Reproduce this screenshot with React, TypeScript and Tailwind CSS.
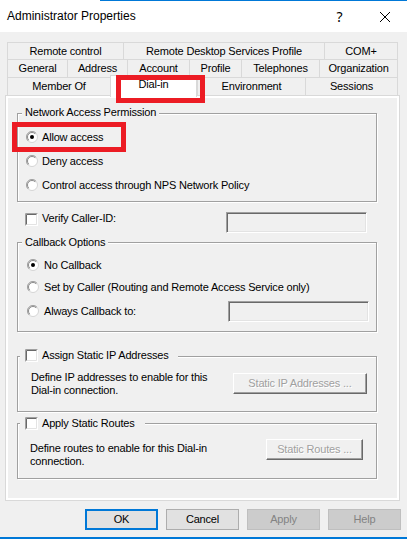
function Radio({ checked }: { checked?: boolean }) {
  return (
    <svg width="12" height="12" viewBox="0 0 12 12" className="shrink-0">
      <circle cx="6" cy="6" r="5.5" fill="#fff" stroke="#d4d4d4" />
      <path d="M2.1 9.9 A5.5 5.5 0 0 1 9.9 2.1" fill="none" stroke="#a0a0a0" />
      <path d="M2.8 9.2 A4.5 4.5 0 0 1 9.2 2.8" fill="none" stroke="#8c8c8c" />
      {checked && <circle cx="6" cy="6" r="2" fill="#000" />}
    </svg>
  );
}

function Check() {
  return (
    <svg width="13" height="13" viewBox="0 0 13 13" className="shrink-0">
      <rect x="0" y="0" width="13" height="13" fill="#fff" />
      <path d="M0.5 12.5V0.5H12.5" fill="none" stroke="#a0a0a0" />
      <path d="M1.5 11.5V1.5H11.5" fill="none" stroke="#696969" />
      <path d="M1 12.5H12.5V1" fill="none" stroke="#ffffff" />
      <path d="M2 11.5H11.5V2" fill="none" stroke="#e3e3e3" />
    </svg>
  );
}

function Tab({ label, w, last }: { label: string; w: string; last?: boolean }) {
  return (
    <div
      className={`${w} h-full flex items-center justify-center border-t border-l border-[#d9d9d9] ${
        last ? "border-r" : ""
      }`}
    >
      {label}
    </div>
  );
}

function SunkenInput({ className }: { className: string }) {
  return (
    <div
      className={`${className} w-[141px] h-[21px] bg-[#f0f0f0] border-t border-l border-t-[#a0a0a0] border-l-[#a0a0a0] border-b border-r border-b-white border-r-white shadow-[inset_1px_1px_0_#696969,inset_-1px_-1px_0_#e3e3e3]`}
    />
  );
}

function ClassicButton({ label, className }: { label: string; className: string }) {
  return (
    <div
      className={`${className} h-[21px] flex items-center justify-center bg-[#f0f0f0] border-t border-l border-t-white border-l-white border-b border-r border-b-[#696969] border-r-[#696969] shadow-[inset_-1px_-1px_0_#a0a0a0] text-[#a0a0a0] [text-shadow:1px_1px_0_#fff]`}
    >
      {label}
    </div>
  );
}

const groupBox =
  "relative w-[360px] border border-[#a0a0a0] shadow-[inset_1px_1px_0_#fff,1px_1px_0_#fff]";

export default function App() {
  return (
    <div className="w-[407px] h-[539px] bg-[#f0f0f0] flex flex-col text-[11px] leading-[13px] tracking-[-0.18px] text-black font-['Liberation_Sans',Arial,sans-serif] overflow-hidden">
      {/* title bar */}
      <div className="bg-white shrink-0 tracking-normal">
        <div className="ml-[100px] h-px bg-[#0078d7]" />
        <div className="h-[31px] flex items-center">
          <span className="pl-[7px] text-[12px] leading-[15px]">Administrator Properties</span>
          <div className="ml-auto w-[45px] h-full flex items-center justify-center text-[14px] font-['Noto_Sans',sans-serif]">
            ?
          </div>
          <div className="w-[45px] h-full flex items-center justify-center">
            <svg width="10" height="10" viewBox="0 0 10 10">
              <path d="M0 0L10 10M10 0L0 10" stroke="#000" strokeWidth="1" />
            </svg>
          </div>
        </div>
      </div>

      {/* tabs + page */}
      <div className="pt-[10px] pl-[5px]">
        <div className="ml-[2px] w-[391px]">
          <div className="h-[17px] flex">
            <Tab label="Remote control" w="w-[116px]" />
            <Tab label="Remote Desktop Services Profile" w="w-[201px]" />
            <Tab label="COM+" w="w-[74px]" last />
          </div>
          <div className="h-[18px] flex">
            <Tab label="General" w="w-[60px]" />
            <Tab label="Address" w="w-[60px]" />
            <Tab label="Account" w="w-[62px]" />
            <Tab label="Profile" w="w-[52px]" />
            <Tab label="Telephones" w="w-[78px]" />
            <Tab label="Organization" w="w-[79px]" last />
          </div>
          <div className="h-[18px] flex items-start">
            <Tab label="Member Of" w="w-[103px]" />
            <div className="relative z-10 w-[87px] h-[22px] -mt-[2px] bg-white border-t border-l border-r border-[#d9d9d9] flex justify-center pt-[2px]">
              Dial-in
              <div className="absolute -top-[1px] left-[5px] w-[89px] h-[28px] border-[5px] border-[#ec1c24]" />
            </div>
            <Tab label="Environment" w="w-[108px]" />
            <Tab label="Sessions" w="w-[93px]" last />
          </div>
        </div>

        <div className="w-[395px] h-[406px] border border-[#d9d9d9] bg-white p-[2px]">
          <div className="h-full bg-[#f0f0f0] pl-[9px] pt-[15px]">
            {/* Network Access Permission */}
            <div className={`${groupBox} pt-[11px] pb-[4px] pl-[8px]`}>
              <span className="absolute -top-[8px] left-[4px] px-[3px] bg-[#f0f0f0]">
                Network Access Permission
              </span>
              <div className="absolute left-[-6px] top-[8px] w-[114px] h-[30px] border-[5px] border-[#ec1c24]" />
              <div className="h-[24px] flex items-center gap-[4px]">
                <Radio checked />
                <span>Allow access</span>
              </div>
              <div className="h-[24px] flex items-center gap-[4px]">
                <Radio />
                <span>Deny access</span>
              </div>
              <div className="h-[24px] flex items-center gap-[4px]">
                <Radio />
                <span>Control access through NPS Network Policy</span>
              </div>
            </div>

            {/* Verify Caller-ID */}
            <div className="w-[360px] mt-[10px] h-[22px] flex items-start pl-[8px]">
              <div className="mt-[1px]">
                <Check />
              </div>
              <span className="ml-[4px]">Verify Caller-ID:</span>
              <SunkenInput className="ml-auto mr-[10px]" />
            </div>

            {/* Callback Options */}
            <div className={`${groupBox} mt-[8px] pt-[11px] pb-[9px] pl-[9px]`}>
              <span className="absolute -top-[7px] left-[4px] px-[3px] bg-[#f0f0f0]">
                Callback Options
              </span>
              <div className="h-[22px] flex items-center gap-[5px]">
                <Radio checked />
                <span>No Callback</span>
              </div>
              <div className="h-[22px] flex items-center gap-[5px]">
                <Radio />
                <span>Set by Caller (Routing and Remote Access Service only)</span>
              </div>
              <div className="mt-[2px] h-[22px] flex items-center gap-[5px]">
                <Radio />
                <span>Always Callback to:</span>
                <SunkenInput className="ml-auto mr-[7px]" />
              </div>
            </div>

            {/* Assign Static IP Addresses */}
            <div className={`${groupBox} mt-[24px] pt-[14px] pb-[14px] pl-[13px] pr-[9px] flex items-start`}>
              <div className="absolute -top-[8px] left-[2px] pl-[5px] pr-[9px] bg-[#f0f0f0] flex items-center">
                <Check />
                <span className="ml-[4px]">Assign Static IP Addresses</span>
              </div>
              <p className="w-[190px]">Define IP addresses to enable for this Dial-in connection.</p>
              <ClassicButton label="Static IP Addresses ..." className="ml-auto mt-[2px] w-[134px]" />
            </div>

            {/* Apply Static Routes */}
            <div className={`${groupBox} mt-[11px] pt-[15px] pb-[10px] pl-[12px] pr-[13px] flex items-start`}>
              <div className="absolute -top-[7px] left-[2px] pl-[5px] pr-[10px] bg-[#f0f0f0] flex items-center">
                <Check />
                <span className="ml-[4px]">Apply Static Routes</span>
              </div>
              <p className="w-[190px] mt-[3px]">Define routes to enable for this Dial-in connection.</p>
              <ClassicButton label="Static Routes ..." className="ml-auto w-[97px]" />
            </div>
          </div>
        </div>
      </div>

      {/* dialog buttons */}
      <div className="mt-[8px] pl-[85px] flex gap-[8px]">
        <div className="w-[73px] h-[21px] flex items-center justify-center bg-[#e1e1e1] border-2 border-[#0078d7]">
          OK
        </div>
        <div className="w-[73px] h-[21px] flex items-center justify-center bg-[#e1e1e1] border border-[#adadad]">
          Cancel
        </div>
        <div className="w-[73px] h-[21px] flex items-center justify-center bg-[#cccccc] border border-[#bfbfbf] text-[#838383]">
          Apply
        </div>
        <div className="w-[73px] h-[21px] flex items-center justify-center bg-[#cccccc] border border-[#bfbfbf] text-[#838383]">
          Help
        </div>
      </div>

      <div className="mt-auto h-[2px] bg-[#0078d7]" />
    </div>
  );
}
